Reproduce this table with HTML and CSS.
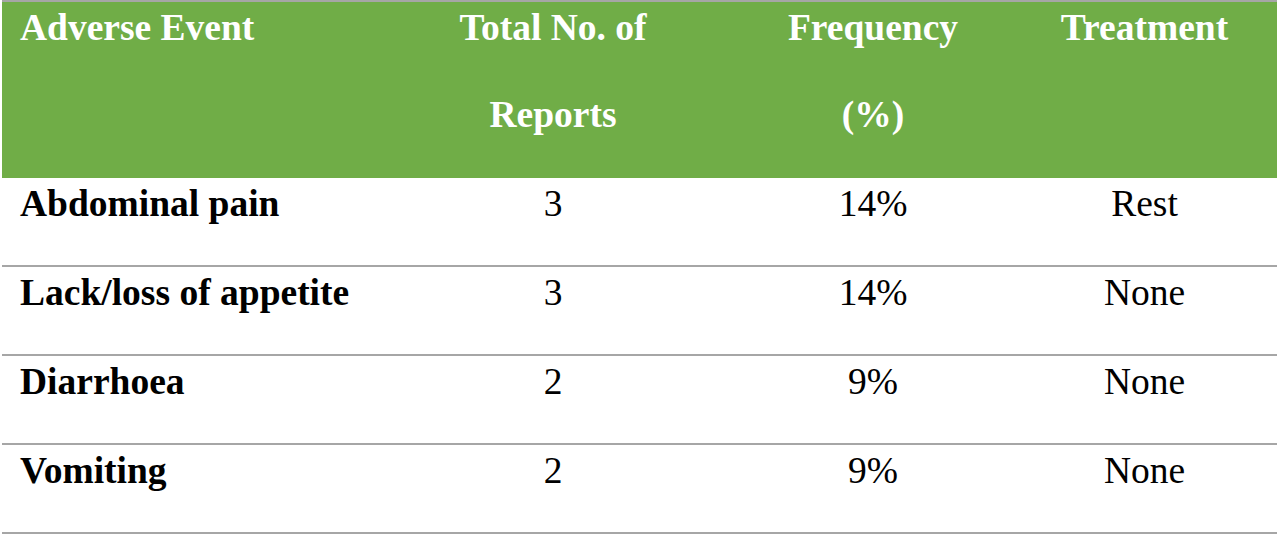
FILE: index.html
```html
<!DOCTYPE html>
<html lang="en">
<head>
<meta charset="utf-8">
<title>Adverse events</title>
<link rel="stylesheet" href="styles.css">
</head>
<body>
<div class="table">
  <div class="row head">
    <div class="cell first"><div class="ln">Adverse Event</div></div>
    <div class="cell"><div class="ln">Total No. of</div><div class="ln">Reports</div></div>
    <div class="cell"><div class="ln">Frequency</div><div class="ln">(%)</div></div>
    <div class="cell"><div class="ln">Treatment</div></div>
  </div>
  <div class="row body">
    <div class="cell first">Abdominal pain</div>
    <div class="cell">3</div>
    <div class="cell">14%</div>
    <div class="cell">Rest</div>
  </div>
  <div class="row body">
    <div class="cell first">Lack/loss of appetite</div>
    <div class="cell">3</div>
    <div class="cell">14%</div>
    <div class="cell">None</div>
  </div>
  <div class="row body">
    <div class="cell first">Diarrhoea</div>
    <div class="cell">2</div>
    <div class="cell">9%</div>
    <div class="cell">None</div>
  </div>
  <div class="row body">
    <div class="cell first">Vomiting</div>
    <div class="cell">2</div>
    <div class="cell">9%</div>
    <div class="cell">None</div>
  </div>
</div>
</body>
</html>
```
FILE: styles.css
```css
html, body {
  margin: 0;
  padding: 0;
  background: #ffffff;
}
body {
  font-family: "Liberation Serif", "Times New Roman", serif;
  font-size: 37.5px;
  color: #000000;
}
.table {
  margin-left: 2px;
  width: 1275px;
  border-top: 2px solid #a6a6a6;
}
.row {
  display: grid;
  grid-template-columns: 370px 362px 278px 265px;
}
.cell {
  text-align: center;
  line-height: 51px;
  white-space: nowrap;
}
.cell.first {
  text-align: left;
  padding-left: 18px;
  font-weight: bold;
}
.head {
  background: #70ad47;
  color: #ffffff;
  font-weight: bold;
  height: 176px;
}
.ln {
  height: 87px;
}
.body {
  height: 87px;
  border-bottom: 2px solid #a6a6a6;
}
```
